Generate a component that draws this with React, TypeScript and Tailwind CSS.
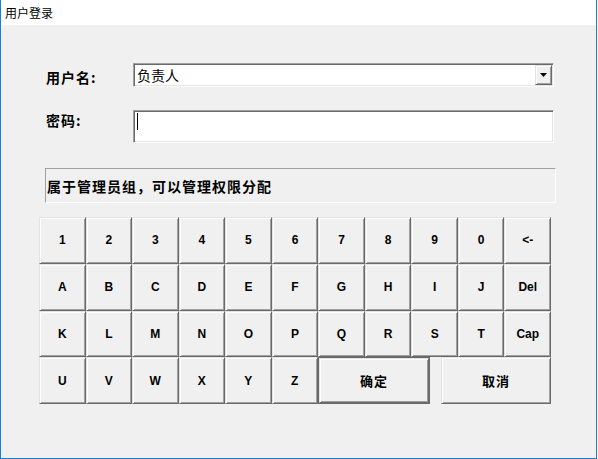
import React from "react";

const cjk = { fontFamily: '"Noto Sans CJK SC", "Liberation Sans", sans-serif' };
const latin = { fontFamily: '"Liberation Sans", "Noto Sans CJK SC", sans-serif' };

const raised =
  "flex items-center justify-center bg-[#f0f0f0] border border-t-[#e3e3e3] border-l-[#e3e3e3] border-r-[#696969] border-b-[#696969] shadow-[inset_1px_1px_0_#ffffff,inset_-1px_-1px_0_#a0a0a0]";

const sunken =
  "bg-white border border-t-[#a0a0a0] border-l-[#a0a0a0] border-r-white border-b-white shadow-[inset_1px_1px_0_#696969,inset_-1px_-1px_0_#e3e3e3]";

const rows: string[][] = [
  ["1", "2", "3", "4", "5", "6", "7", "8", "9", "0", "<-"],
  ["A", "B", "C", "D", "E", "F", "G", "H", "I", "J", "Del"],
  ["K", "L", "M", "N", "O", "P", "Q", "R", "S", "T", "Cap"],
];

function Key({ label }: { label: string }) {
  return (
    <div className={`${raised} h-[46.75px] text-[12px] font-bold text-black`} style={latin}>
      {label}
    </div>
  );
}

export default function App() {
  return (
    <div className="w-[598px] h-[459px] bg-white overflow-hidden">
      <div className="w-[597px] h-[459px] flex flex-col border-l border-r border-b border-[#1a7fd4]">
        {/* title bar */}
        <div className="h-[25px] bg-white flex items-center pl-[4px] text-[12px] text-black" style={cjk}>
          用户登录
        </div>

        {/* client area */}
        <div className="flex-1 bg-[#f0f0f0] flex flex-col pt-[38px]">
          {/* user name */}
          <div className="flex items-start">
            <span
              className="ml-[45px] mt-[6px] w-[87px] text-[14px] leading-[16px] font-bold tracking-[1px] text-black"
              style={cjk}
            >
              用户名:
            </span>
            <div className={`${sunken} w-[421px] h-[24px] flex items-center pl-[3px] pr-[1px]`}>
              <span className="flex-1 text-[14px] leading-[16px] text-black" style={cjk}>
                负责人
              </span>
              <div className={`${raised} w-[17px] h-[20px]`}>
                <svg width="7" height="4" viewBox="0 0 7 4">
                  <path d="M0 0h7L3.5 4z" fill="#000" />
                </svg>
              </div>
            </div>
          </div>

          {/* password */}
          <div className="flex items-start mt-[23px]">
            <span
              className="ml-[45px] mt-[2px] w-[87px] text-[14px] leading-[16px] font-bold tracking-[1px] text-black"
              style={cjk}
            >
              密码:
            </span>
            <div className={`${sunken} w-[421px] h-[33px] pl-[3px] pt-[2px]`}>
              <div className="w-[1px] h-[17px] bg-black" />
            </div>
          </div>

          {/* group description */}
          <div
            className="ml-[44px] mt-[25px] w-[511px] h-[35px] flex items-center border border-t-[#a0a0a0] border-l-[#a0a0a0] border-r-white border-b-white pl-[1px] text-[14px] leading-[16px] font-bold tracking-[1px] text-black"
            style={cjk}
          >
            属于管理员组，可以管理权限分配
          </div>

          {/* on-screen keyboard */}
          <div className="ml-[38px] mt-[14px] w-[512px] flex flex-col">
            {rows.map((r, i) => (
              <div key={i} className="grid grid-cols-11">
                {r.map((k) => (
                  <Key key={k} label={k} />
                ))}
              </div>
            ))}
            <div className="grid grid-cols-[repeat(6,46.5px)_112px_11px_110px]">
              {["U", "V", "W", "X", "Y", "Z"].map((k) => (
                <Key key={k} label={k} />
              ))}
              <div className="h-[46.75px] border border-[#696969]">
                <div
                  className={`${raised} h-full text-[13px] font-bold tracking-[1px] text-black`}
                  style={cjk}
                >
                  确定
                </div>
              </div>
              <div />
              <div
                className={`${raised} h-[46.75px] text-[13px] font-bold tracking-[1px] text-black`}
                style={cjk}
              >
                取消
              </div>
            </div>
          </div>
        </div>
      </div>
    </div>
  );
}
